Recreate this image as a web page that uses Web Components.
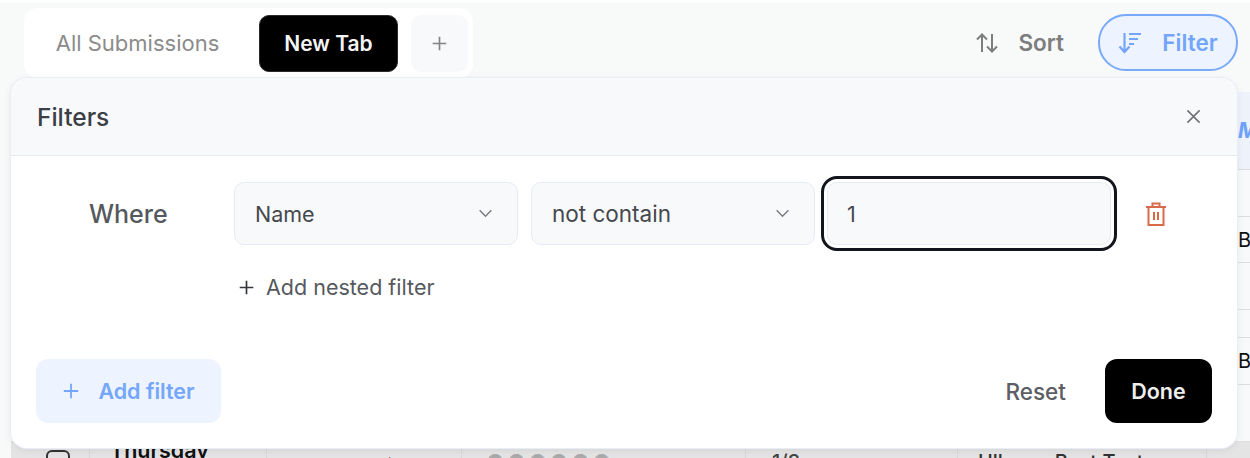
<!DOCTYPE html>
<html>
<head>
<meta charset="utf-8">
<title>Filters</title>
<style>
  html, body { margin: 0; height: 458px; overflow: hidden; }
  body { background: #f8f9f9; font-family: Inter, "Liberation Sans", sans-serif; position: relative; }
</style>
</head>
<body>
<x-toolbar>
  <x-tabs slot="tabs">
    <x-tab>All Submissions</x-tab>
    <x-tab active>New Tab</x-tab>
    <x-tab add></x-tab>
  </x-tabs>
  <x-action slot="actions" icon="sort">Sort</x-action>
  <x-action slot="actions" icon="filter" active>Filter</x-action>
</x-toolbar>
<x-table></x-table>
<x-filter-panel>
  <x-select slot="fields" style="width:284px">Name</x-select>
  <x-select slot="fields" style="width:284px;font-size:22.5px">not contain</x-select>
  <x-input slot="fields">1</x-input>
</x-filter-panel>

<script>
const html = String.raw;

const icons = {
  plus: html`<svg viewBox="0 0 20 20" fill="none" stroke="currentColor" stroke-width="2"><path d="M10 2v16M2 10h16"/></svg>`,
  sort: html`<svg viewBox="0 0 24 24" fill="none" stroke="currentColor" stroke-width="2"><path d="M7 21V3.5M2 8.5l5-5 5 5M17 3v17.5M12 15.5l5 5 5-5"/></svg>`,
  filter: html`<svg viewBox="0 0 24 24" fill="none" stroke="currentColor" stroke-width="2.2"><path d="M6.5 2v19M1.5 15.5l5 5.5 5-5.5M11 3h12M11 8h9M11 13h5"/></svg>`,
  close: html`<svg viewBox="0 0 16 16" fill="none" stroke="currentColor" stroke-width="1.7"><path d="M1.5 1.5l13 13M14.5 1.5l-13 13"/></svg>`,
  chevron: html`<svg viewBox="0 0 16 10" fill="none" stroke="currentColor" stroke-width="1.6"><path d="M1.5 1.5L8 8l6.5-6.5"/></svg>`,
  trash: html`<svg viewBox="0 0 22 26" fill="none" stroke="currentColor" stroke-width="2"><path d="M1 6h20M7.5 6V2.5h7V6M3.5 6v18h15V6M9 11v8M13 11v8"/></svg>`
};

class XToolbar extends HTMLElement {
  constructor() {
    super();
    this.attachShadow({ mode: 'open' }).innerHTML = html`
      <style>
        :host { display: flex; align-items: flex-start; justify-content: space-between; box-sizing: border-box; height: 92px; padding: 5px 12px 0 24px; border-top: 3px solid #fdfdfd; }
        .actions { display: flex; align-items: center; gap: 34px; padding-top: 6px; }
      </style>
      <slot name="tabs"></slot>
      <div class="actions"><slot name="actions"></slot></div>
    `;
  }
}

class XTabs extends HTMLElement {
  constructor() {
    super();
    this.attachShadow({ mode: 'open' }).innerHTML = html`
      <style>
        :host { display: flex; align-items: center; gap: 13px; box-sizing: border-box; width: 449px; height: 70px; padding: 6px 5px; background: #fff; border-radius: 14px; }
      </style>
      <slot></slot>
    `;
  }
}

class XTab extends HTMLElement {
  constructor() {
    super();
    this.attachShadow({ mode: 'open' }).innerHTML = html`
      <style>
        :host { display: flex; flex: none; align-items: center; justify-content: center; box-sizing: border-box; height: 57px; font-size: 22px; color: #8b8b8b; width: 217px; white-space: nowrap; }
        :host([active]) { width: 139px; background: #000; color: #f4f4f4; border-radius: 10px; font-size: 21px; font-weight: 600; border: 1px solid #2a2a2a; }
        :host([add]) { width: 57px; background: #f8f9fb; border-radius: 10px; color: #858585; }
        svg { width: 17px; height: 17px; }
      </style>
      <slot></slot>${this.hasAttribute('add') ? icons.plus : ''}
    `;
  }
}

class XAction extends HTMLElement {
  constructor() {
    super();
    const icon = icons[this.getAttribute('icon')];
    this.attachShadow({ mode: 'open' }).innerHTML = html`
      <style>
        :host { display: flex; align-items: center; gap: 19px; box-sizing: border-box; height: 57px; font-size: 22.5px; font-weight: 600; color: #7d7d7d; }
        :host([active]) { width: 140px; justify-content: center; gap: 20px; color: #72a5fb; background: #eef4ff; border: 2px solid #78a9fb; border-radius: 28px; }
        svg { width: 24px; height: 24px; }
      </style>
      ${icon}<slot></slot>
    `;
  }
}

// the table sits behind the panel, only its edges show
class XTable extends HTMLElement {
  constructor() {
    super();
    const columns = '78px 177px 195px 284px 212px 249px 44px';
    const heights = [47, 46, 47, 28, 47, 57];
    const rows = heights.map((h, i) => {
      const letter = i === 1 || i === 4 ? 'B' : '';
      return html`<div class="row" style="height:${h}px"><span></span><span></span><span></span><span></span><span></span><span></span><span class="b">${letter}</span></div>`;
    }).join('');
    this.attachShadow({ mode: 'open' }).innerHTML = html`
      <style>
        :host { display: block; margin-left: 11px; color: #111; }
        .head { height: 78px; background: #edf2fb; display: flex; align-items: center; justify-content: flex-end; overflow: hidden; border-bottom: 1px solid #dcdcdc; box-sizing: border-box; }
        .head b { color: #6fa3fb; font-size: 21px; width: 12px; white-space: nowrap; overflow: hidden; font-style: italic; }
        .row { display: grid; grid-template-columns: ${columns}; box-sizing: border-box; background: #f8f9fb; border-bottom: 1px solid #dedede; align-items: center; font-size: 20px; }
        .row span { min-width: 0; }
        .b { padding-left: 32px; white-space: nowrap; overflow: hidden; }
        .last { display: grid; grid-template-columns: ${columns}; height: 16px; overflow: hidden; background: #e4e4e4; font-size: 20px; font-weight: 500; }
        .last div { border-left: 1px solid #d8d8d8; padding-top: 9px; white-space: nowrap; overflow: hidden; line-height: 22px; }
        .last div:first-child { border-left: 0; padding: 8px 0 0 35px; }
        .last .day { padding: 0 0 0 20px; margin-top: -3px; font-size: 21.5px; font-weight: 600; }
        .check { display: block; box-sizing: border-box; width: 24px; height: 24px; border: 2px solid #333; border-radius: 6px; }
      </style>
      <div class="head"><b>M</b></div>
      ${rows}
      <div class="last">
        <div><span class="check"></span></div>
        <div class="day">Thursday</div>
        <div style="padding-left:108px;color:#555">✓</div>
        <div style="padding-left:24px;color:#aaa;letter-spacing:3px">●●●●●●</div>
        <div style="padding-left:26px;color:#444">1/3</div>
        <div style="padding-left:20px;color:#333">Ullman&nbsp;&nbsp;Best Text</div>
        <div></div>
      </div>
    `;
  }
}

class XSelect extends HTMLElement {
  constructor() {
    super();
    this.attachShadow({ mode: 'open' }).innerHTML = html`
      <style>
        :host { display: flex; align-items: center; justify-content: space-between; box-sizing: border-box; height: 63px; padding: 0 24px 0 20px; background: #f8f9fb; border: 1px solid #e6eaf2; border-radius: 10px; font-size: 21.5px; color: #45484d; white-space: nowrap; }
        svg { width: 15px; height: 9px; color: #777b80; }
      </style>
      <slot></slot>${icons.chevron}
    `;
  }
}

class XInput extends HTMLElement {
  constructor() {
    super();
    this.attachShadow({ mode: 'open' }).innerHTML = html`
      <style>
        :host { display: flex; align-items: center; box-sizing: border-box; width: 296px; height: 75px; margin: -6px 0 -6px -7px; padding: 0 23px; background: #f8f9fb; border: 3px solid #13151c; border-radius: 16px; box-shadow: inset 0 0 0 3px #fff, inset 0 0 0 4px #e8ebf2; font-size: 21.5px; color: #45484d; }
      </style>
      <slot></slot>
    `;
  }
}

class XFilterPanel extends HTMLElement {
  constructor() {
    super();
    this.attachShadow({ mode: 'open' }).innerHTML = html`
      <style>
        :host { position: absolute; left: 11px; top: 78px; width: 1226px; height: 370px; display: flex; flex-direction: column; box-sizing: border-box; background: #fff; border-radius: 16px; box-shadow: 0 0 0 1px #e9edf5, 0 2px 8px rgba(0,0,0,.08); overflow: hidden; }
        header { display: flex; align-items: center; justify-content: space-between; height: 78px; flex: none; box-sizing: border-box; padding: 0 36px 0 26px; background: #f8f9fb; border-bottom: 1px solid #e6eaf0; font-size: 24.5px; font-weight: 500; color: #3b3e44; }
        header svg { width: 15px; height: 15px; color: #6f7276; }
        main { flex: 1; padding: 26px 0 0 78px; }
        .row { display: flex; align-items: center; gap: 13px; }
        .where { width: 132px; font-size: 25px; font-weight: 500; color: #55585d; flex: none; }
        .trash { width: 22px; height: 26px; margin-left: 15px; color: #d9694b; }
        .nested { display: flex; align-items: center; gap: 11px; margin: 29px 0 0 149px; font-size: 21.5px; color: #55585d; }
        .nested svg { width: 17px; height: 17px; color: #33363b; }
        footer { display: flex; align-items: center; justify-content: space-between; padding: 0 25px 25px 25px; }
        .btn { display: flex; align-items: center; justify-content: center; box-sizing: border-box; height: 64px; font-size: 21.5px; font-weight: 600; border-radius: 12px; }
        .add { width: 185px; gap: 18px; background: #edf4ff; color: #74a6fb; }
        .add svg { width: 18px; height: 18px; }
        .right { display: flex; align-items: center; gap: 39px; }
        .reset { color: #5b5e63; font-size: 22.5px; font-weight: 500; }
        .done { width: 107px; background: #000; color: #eee; }
      </style>
      <header><span>Filters</span>${icons.close}</header>
      <main>
        <div class="row">
          <span class="where">Where</span>
          <slot name="fields"></slot>
          <span class="trash">${icons.trash}</span>
        </div>
        <div class="nested">${icons.plus}<span>Add nested filter</span></div>
      </main>
      <footer>
        <div class="btn add">${icons.plus}<span>Add filter</span></div>
        <div class="right">
          <div class="btn reset">Reset</div>
          <div class="btn done">Done</div>
        </div>
      </footer>
    `;
  }
}

customElements.define('x-toolbar', XToolbar);
customElements.define('x-tabs', XTabs);
customElements.define('x-tab', XTab);
customElements.define('x-action', XAction);
customElements.define('x-table', XTable);
customElements.define('x-select', XSelect);
customElements.define('x-input', XInput);
customElements.define('x-filter-panel', XFilterPanel);
</script>
</body>
</html>
